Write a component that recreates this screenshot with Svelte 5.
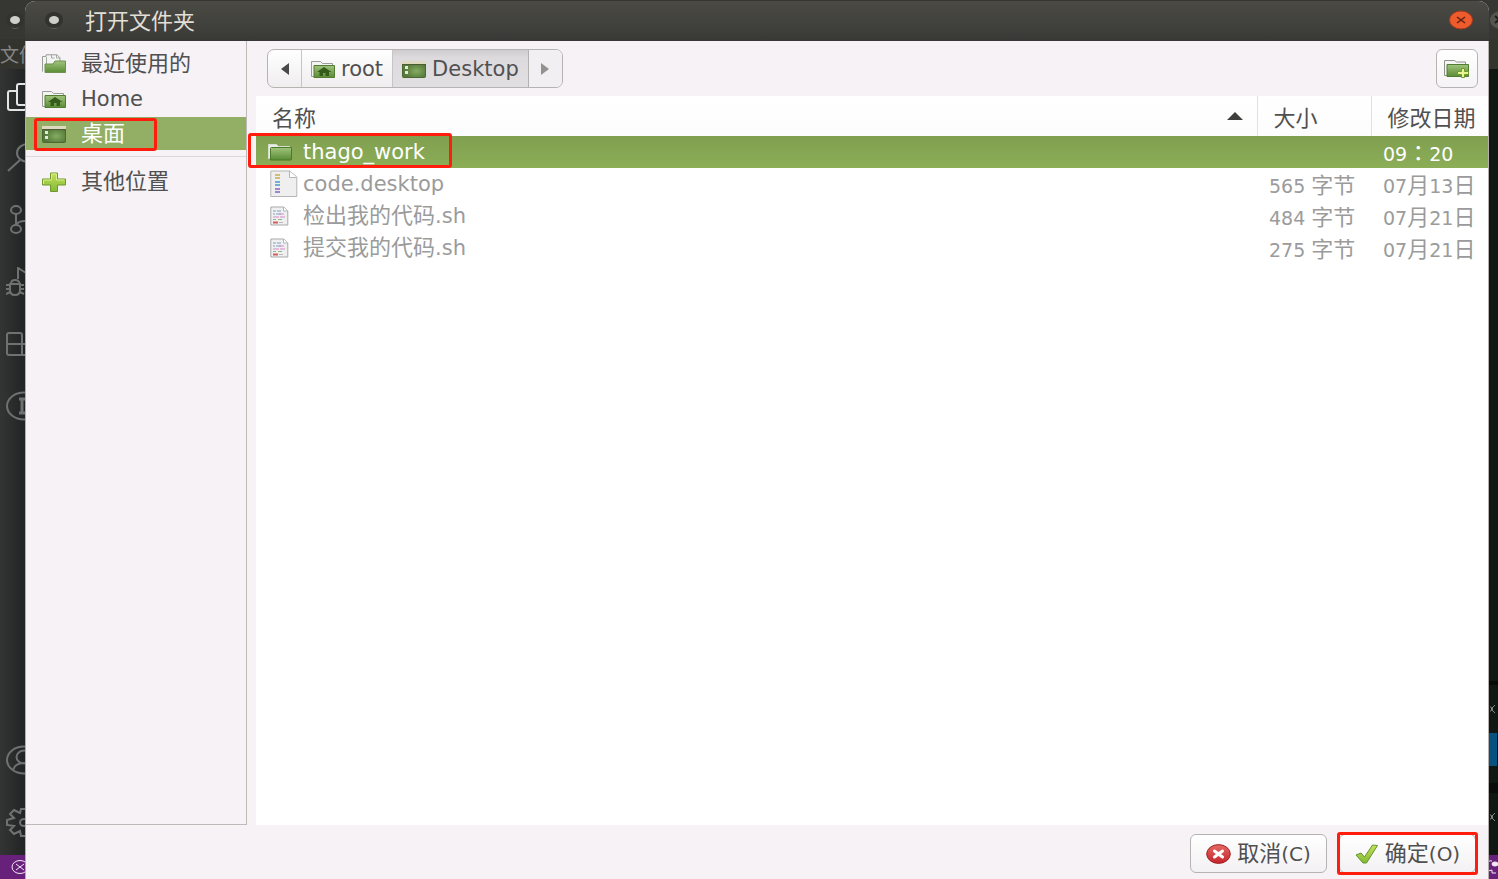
<script>
  const places = [
    { icon: 'recent', name: '最近使用的' },
    { icon: 'home', name: 'Home' },
    { icon: 'desktop', name: '桌面', selected: true },
    { icon: 'plus', name: '其他位置', separated: true }
  ];
  const files = [
    { icon: 'folder', name: 'thago_work', size: '', date: '09：20', selected: true },
    { icon: 'entry', name: 'code.desktop', size: '565 字节', date: '07月13日' },
    { icon: 'shell', name: '检出我的代码.sh', size: '484 字节', date: '07月21日' },
    { icon: 'shell', name: '提交我的代码.sh', size: '275 字节', date: '07月21日' }
  ];
  const tools = ['files', 'search', 'git', 'debug', 'blocks', 'info'];
  const accounts = ['account', 'gear'];

  // Splits a label into Latin, Han and full-width punctuation runs, which are set differently.
  const runs = (text) => text.match(/：|[\u3000-\uff00]+|[^\u3000-\uffef]+/g) ?? [];
</script>

{#snippet label(text)}{#each runs(text) as run}{#if /[\u3000-\uffef]/.test(run)}<span class="han" class:centred={run === '：'}>{run}</span>{:else}{run}{/if}{/each}{/snippet}

{#snippet icon(name)}
  {#if name === 'recent'}
    <svg width="24" height="20" viewBox="0 0 24 20" aria-hidden="true">
      <path d="M.5 17.500V2.500H4V.8h11l3 3V9" fill="#f4f4f2" stroke="#9b9d98" />
      <path d="M9.500 1v3h3M14.500 1v3H18M4.500 3v12" fill="none" stroke="#a8aaa5" />
      <path d="M3 18.500V10h8l2-3h10.500v11.500z" fill="url(#leaf)" stroke="#6c9150" />
    </svg>
  {:else if name === 'home'}
    <svg width="24" height="18" viewBox="0 0 24 18" aria-hidden="true">
      <path d="M.5 16.500V1.500h9l2 2h10V6M.5 16.500H3" fill="#f4f4f2" stroke="#9b9d98" />
      <path d="M3 17.500V5.500h20.500v12z" fill="url(#leaf)" stroke="#527c34" />
      <path d="M13 7 6 12h2.500v4H12v-3h2.500v3H18v-4h2.500z" fill="#365c1d" />
    </svg>
  {:else if name === 'desktop'}
    <svg width="24" height="18" viewBox="0 0 24 18" aria-hidden="true">
      <rect x=".5" y="1.500" width="23" height="16" rx="1" fill="url(#screen)" stroke="#4b6832" />
      <path d="M0 1h24v3H0z" fill="#ded8bf" /><path d="M0 4.500h24" stroke="#4c5c34" />
      <path d="M3 6h3v3H3zm0 5h3v3H3z" fill="#e2e9d9" />
    </svg>
  {:else if name === 'plus'}
    <svg width="24" height="20" viewBox="0 0 24 20" aria-hidden="true">
      <path d="M8.500 1h7v6h8v6h-8v6.500h-7V13h-8V7h8z" fill="url(#lime)" stroke="#6f982c" />
      <path d="M9.500 7.500V2h5v6h8M1.500 12V8h8" fill="none" stroke="#d9ee91" />
    </svg>
  {:else if name === 'folder'}
    <svg width="24" height="18" viewBox="0 0 24 18" aria-hidden="true">
      <path d="M.5 16V1.500h8l2 2h11V6" fill="#e9ece4" stroke="#d9ddd2" />
      <path d="M2.500 17V5.500q0-1 1-1h20V16q0 1-1 1z" fill="url(#leaf)" stroke="#4a7a2a" />
    </svg>
  {:else if name === 'new-folder'}
    <svg width="26" height="20" viewBox="0 0 26 20" aria-hidden="true">
      <path d="M.5 16.500V1.500h10l2 1.500h9V6M.5 16.500H3" fill="#f5f5f3" stroke="#8f928c" />
      <path d="M3 17.500v-12h21.500v12z" fill="url(#leaf)" stroke="#527c34" />
      <path d="M17.500 9.500h3v3h4v3h-4v3h-3v-3h-4v-3h4z" fill="#e6f58f" stroke="#6f982c" />
    </svg>
  {:else if name === 'entry'}
    <svg width="28" height="28" viewBox="0 0 28 28" aria-hidden="true">
      <path d="M.8 1h19l7 6v19.500H.8z" fill="#efefef" stroke="#b5b5b5" />
      <path d="M19.500 1v6.500h7" fill="#fff" stroke="#b5b5b5" />
      <path d="M5 5h5M5 8h5" stroke="#d0be77" stroke-width="2" />
      <path d="M5 12h5M5 15h5" stroke="#74add1" stroke-width="2" />
      <path d="M5 19h5M5 22h5" stroke="#9d86cc" stroke-width="2" />
    </svg>
  {:else if name === 'shell'}
    <svg width="19" height="20" viewBox="0 0 19 20" aria-hidden="true">
      <path d="M.8 1h13l4 4v14H.8z" fill="#f0f0f0" stroke="#a9a9a9" />
      <path d="M13.500 1v4h4" fill="#fff" stroke="#b5b5b5" />
      <path d="M3 5h3m1 0h4M3 8h2m1 0h5" stroke="#7f9fc9" />
      <path d="M3 11h6m1 0h5M9 8h5" stroke="#d38bc0" />
      <path d="M3 13.500h3m2 0h4" stroke="#8cb98c" /><path d="M3 16.500h5" stroke="#dc5b5b" stroke-width="2" /><path d="M9 16.500h4" stroke="#b9b9b9" />
    </svg>
  {:else if name === 'cancel'}
    <svg width="25" height="20" viewBox="0 0 25 20" aria-hidden="true">
      <ellipse cx="12.500" cy="10" rx="11.800" ry="9.400" fill="url(#ruby)" stroke="#a32024" />
      <path d="m8.500 7 8 6m0-6-8 6" stroke="#fff" stroke-width="3" stroke-linecap="round" />
    </svg>
  {:else if name === 'accept'}
    <svg width="24" height="20" viewBox="0 0 24 20" aria-hidden="true">
      <path d="m1 11 5-2 3.500 4L17.500 1l5 .5L11.500 19H8z" fill="url(#lime)" stroke="#64942f" stroke-linejoin="round" />
    </svg>
  {/if}
{/snippet}

{#snippet tool(name)}
  <svg class="tool" class:active={name === 'files'} width="36" height="30" viewBox="0 0 36 30" aria-hidden="true">
    {#if name === 'files'}
      <path d="M11 8H4q-2 0-2 2v15q0 2 2 2h14q2 0 2-2v-3M13 1h12l7 7v12q0 2-2 2H13q-2 0-2-2V3q0-2 2-2z" />
    {:else if name === 'search'}
      <ellipse cx="22" cy="10" rx="11" ry="9" /><path d="M14 17 2 28" />
    {:else if name === 'git'}
      <ellipse cx="10" cy="5" rx="5" ry="4" /><ellipse cx="10" cy="24" rx="5" ry="4" /><ellipse cx="26" cy="10" rx="5" ry="4" /><path d="M10 9v11q2-4 9-4 5 0 7-2" />
    {:else if name === 'debug'}
      <path d="M12 12V1l21 13-12 8M4 17h10v6q0 5-5 5t-5-5zM5 17q0-4 4-4t5 4M0 18h4m-4 4h4m-4 5 4-2m10-7h4m-4 4h4m-4 3 4 2" />
    {:else if name === 'blocks'}
      <path d="M3 4h11q2 0 2 2v20H3q-2 0-2-2V6q0-2 2-2zM1 15h28v9q0 2-2 2H16M20 1h12v10H20z" />
    {:else if name === 'info'}
      <ellipse cx="18" cy="15" rx="17" ry="13.500" /><path d="M13 8h6m-6 14h6M16 8v14" stroke-width="3" />
    {:else if name === 'account'}
      <ellipse cx="18" cy="15" rx="17" ry="13.500" /><ellipse cx="18" cy="12" rx="7.500" ry="6.500" /><path d="M7 25q2-7 11-7t11 7" />
    {:else}
      <path d="M15 2h6l1 4 6-3 4 4-4 4 7 2v5l-7 1 4 4-4 4-6-3-1 5h-6l-1-5-6 3-4-4 4-4-7-1v-5l7-2-4-4 4-4 6 3z" /><ellipse cx="18" cy="15.500" rx="4" ry="3.500" />
    {/if}
  </svg>
{/snippet}

{#snippet edgeMark()}
  <svg width="8" height="12" viewBox="0 0 8 12" aria-hidden="true"><path d="m-2 2 5 4-5 4M5 2 1 6l4 4" fill="none" stroke="#858b87" /></svg>
{/snippet}

<svg class="defs" aria-hidden="true">
  <defs>
    <linearGradient id="leaf" x1="0" y1="0" x2="0" y2="1"><stop offset="0" stop-color="#a0c47c" /><stop offset="1" stop-color="#5a8c35" /></linearGradient>
    <linearGradient id="lime" x1="0" y1="0" x2="0" y2="1"><stop offset="0" stop-color="#c4e05a" /><stop offset="1" stop-color="#83ba35" /></linearGradient>
    <linearGradient id="ruby" x1="0" y1="0" x2="0" y2="1"><stop offset="0" stop-color="#e56a63" /><stop offset="1" stop-color="#c4242b" /></linearGradient>
    <radialGradient id="screen" cx=".6" cy=".6"><stop offset="0" stop-color="#86ab62" /><stop offset="1" stop-color="#54793a" /></radialGradient>
  </defs>
</svg>

<div class="screen">
  <div class="editor">
    <div class="editor-title">
      <span class="dot"></span>
      <svg width="8" height="22" viewBox="0 0 8 22" aria-hidden="true"><ellipse cx="11" cy="11" rx="11" ry="9" fill="#55554f" /><path d="m5 7 8 7m0-7-8 7" stroke="#1d1d1b" stroke-width="2" /></svg>
    </div>
    <div class="editor-menu"><span class="han">文件</span></div>
    <div class="editor-body">
      <nav class="tools">
        {#each tools as name}<div class="slot">{@render tool(name)}</div>{/each}
        <div class="fill"></div>
        {#each accounts as name}<div class="slot">{@render tool(name)}</div>{/each}
      </nav>
      <div class="edge">
        <div class="edge-top"></div>
        <div class="edge-panel">{@render edgeMark()}</div>
        <div class="edge-blue"></div>
        <div class="edge-rule"></div>
        <div class="edge-panel low">{@render edgeMark()}</div>
      </div>
    </div>
    <div class="status">
      <svg width="20" height="16" viewBox="0 0 20 16" aria-hidden="true"><ellipse cx="9" cy="8" rx="8" ry="6.500" /><path d="m5 5 8 6m0-6-8 6" /></svg>
      <svg width="18" height="16" viewBox="0 0 18 16" aria-hidden="true"><ellipse class="solid" cx="15" cy="5" rx="3" ry="2" /><path d="M8 3q2-2 4-1M8 12l4-1v3h4" /></svg>
    </div>
  </div>

  <section class="dialog" aria-label="打开文件夹">
    <header class="titlebar">
      <span class="dot"></span>
      <h1 class="han">打开文件夹</h1>
      <button class="close" aria-label="关闭"><svg width="24" height="20" viewBox="0 0 24 20" aria-hidden="true"><ellipse cx="12" cy="10" rx="11.500" ry="9" fill="#ee5b2c" stroke="#a83a1b" /><path d="m8 7 8 6m0-6-8 6" stroke="#5c2415" stroke-width="1.500" /></svg></button>
    </header>

    <div class="content">
      <nav class="places">
        {#each places as place}
          {#if place.separated}<hr />{/if}
          <button class="place" class:selected={place.selected}>
            {@render icon(place.icon)}
            <span>{@render label(place.name)}</span>
            {#if place.selected}<span class="mark"></span>{/if}
          </button>
        {/each}
      </nav>

      <main>
        <div class="pathbar">
          <div class="crumbs">
            <button class="arrow" aria-label="后退"><svg width="8" height="12" viewBox="0 0 8 12" aria-hidden="true"><path d="M8 0v12L0 6z" fill="#4a4a48" /></svg></button>
            <button class="crumb">{@render icon('home')}root</button>
            <button class="crumb current">{@render icon('desktop')}Desktop</button>
            <button class="arrow dim" aria-label="前进"><svg width="8" height="12" viewBox="0 0 8 12" aria-hidden="true"><path d="M0 0v12l8-6z" fill="#92928f" /></svg></button>
          </div>
          <button class="create" aria-label="创建文件夹">{@render icon('new-folder')}</button>
        </div>

        <div class="list">
          <table>
            <thead>
              <tr>
                <th class="name"><div class="sort"><span class="han">名称</span><svg width="16" height="8" viewBox="0 0 16 8" aria-hidden="true"><path d="M0 8 8 0l8 8z" fill="#3f3f3d" /></svg></div></th>
                <th class="size"><div class="sort han">大小</div></th>
                <th class="date"><div class="sort han">修改日期</div></th>
              </tr>
            </thead>
            <tbody>
              {#each files as file}
                <tr class:selected={file.selected}>
                  <td><div class="file">
                    <span class="glyph">{@render icon(file.icon)}</span>
                    <span>{@render label(file.name)}</span>
                    {#if file.selected}<span class="mark"></span>{/if}
                  </div></td>
                  <td class="figure">{@render label(file.size)}</td>
                  <td class="figure">{@render label(file.date)}</td>
                </tr>
              {/each}
            </tbody>
          </table>
        </div>
      </main>
    </div>

    <footer>
      <button class="action">{@render icon('cancel')}<span>{@render label('取消(C)')}</span></button>
      <button class="action">{@render icon('accept')}<span>{@render label('确定(O)')}</span><span class="mark"></span></button>
    </footer>
  </section>
</div>

<style>
  :global(body) { margin: 0; background: #222524; }
  * { box-sizing: border-box; }
  svg { display: block; flex: none; }
  .defs { position: absolute; width: 0; height: 0; }
  button { position: relative; font: inherit; color: inherit; padding: 0; border: 0; background: none; }

  .screen { position: relative; min-height: 100vh; display: flex; overflow: hidden; font: 21px/30px "DejaVu Sans", "Noto Sans CJK SC", sans-serif; color: #505050; }
  .han { font-family: "Noto Sans CJK SC", sans-serif; font-size: 22px; font-weight: 400; line-height: 24px; }
  .centred { font-family: "Noto Sans CJK TC", sans-serif; }

  .editor { flex: 1; display: flex; flex-direction: column; background: #252828; color: #858585; }
  .editor-title { height: 39px; padding-left: 10px; display: flex; align-items: center; justify-content: space-between; background: #363632; }
  .editor-menu { height: 30px; display: flex; align-items: center; background: #34342f; }
  .editor-menu .han { font-size: 19px; }
  .editor-body { flex: 1; display: flex; justify-content: space-between; }
  .tools { width: 60px; padding: 0 0 2px 6px; display: flex; flex-direction: column; background: linear-gradient(90deg, #343434, #222525 24px); }
  .slot { height: 62px; display: flex; align-items: center; }
  .slot:first-child { height: 58px; }
  .fill { flex: 1; }
  .tool { fill: none; stroke: #6f7170; stroke-width: 2; }
  .tool.active { stroke: #e4e4e4; }
  .edge { width: 9px; display: flex; flex-direction: column; background: #101713; overflow: hidden; }
  .edge-top { flex: 1; border-bottom: 4px solid #060a08; }
  .edge-panel { height: 48px; padding-left: 1px; display: flex; align-items: center; }
  .edge-panel.low { height: 62px; padding-bottom: 14px; }
  .edge-blue { height: 33px; margin-right: 1px; background: #07517f; }
  .edge-rule { height: 10px; margin-top: 17px; background: #070b09; }
  .status { height: 24px; padding-left: 11px; display: flex; align-items: center; justify-content: space-between; background: #68217a; }
  .status svg { fill: none; stroke: #f2e8f5; stroke-width: 1; }
  .status .solid { fill: #f2e8f5; }

  .dot { width: 10px; height: 8px; border-radius: 50%; background: #cfcfc9; box-shadow: 0 0 0 4px #32322e, 0 5px 0 0 #5d5d57; }

  .dialog { position: absolute; inset: 1px 9px 0 25px; display: flex; flex-direction: column; border-radius: 10px 10px 0 0; background: #f6f2f6; overflow: hidden; }
  .titlebar { height: 40px; padding: 0 16px 2px 24px; display: flex; align-items: center; background: linear-gradient(#4b4a44, #3d3d3a 80%, #373735); color: #e2dfd6; }
  h1 { margin: 0 auto 0 26px; line-height: 30px; padding-bottom: 3px; }

  .content { flex: 1; display: flex; border: solid #b5b0ae; border-width: 0 1px; }
  .places { width: 221px; flex: none; padding-top: 6px; display: flex; flex-direction: column; gap: 2px; border: solid #bfb9b7; border-width: 0 1px 1px 0; }
  .place { height: 33px; padding-left: 16px; display: flex; align-items: center; gap: 15px; text-align: left; }
  .place.selected { background: #93af65; color: #fff; }
  hr { width: 100%; margin: 4px 0 6px; border: 0; border-top: 1px solid #dcd8da; }
  .mark { position: absolute; border: 3px solid #ff1d0d; border-radius: 3px; pointer-events: none; }
  .place .mark { inset: 1px 89px -1px 8px; }

  main { flex: 1; min-width: 0; padding-left: 9px; display: flex; flex-direction: column; }
  .pathbar { height: 55px; padding: 0 10px 0 11px; display: flex; align-items: center; justify-content: space-between; }
  .crumbs { height: 39px; display: flex; border: 1px solid #b7b3b3; border-radius: 7px; background: linear-gradient(#fff, #f0edef); overflow: hidden; }
  .arrow { width: 33px; display: grid; place-items: center; }
  .arrow.dim { background: #f1eff1; }
  .crumb { padding: 0 9px; display: flex; align-items: center; gap: 6px; border-left: 1px solid #c8c4c5; }
  .crumb.current { border-right: 1px solid #b5b1b3; background: linear-gradient(#cfcccf, #dddadd 20%, #e2dfe2); }
  .create { width: 42px; height: 39px; display: grid; place-items: center; border: 1px solid #b7b3b3; border-radius: 6px; background: linear-gradient(#fff, #f5f3f5); }

  .list { flex: 1; background: #fff; }
  table { width: 100%; border-collapse: collapse; table-layout: fixed; }
  th, td { padding: 0; text-align: left; font-weight: 400; white-space: nowrap; }
  th { height: 40px; padding-left: 16px; background: linear-gradient(#fff, #fdfcfd); }
  th.size, th.date { border-left: 1px solid #e2e0e2; }
  th.size { width: 114px; }
  th.date { width: 117px; }
  .sort { height: 32px; display: flex; align-items: center; justify-content: space-between; }
  .name .sort { padding-right: 14px; }
  td { height: 32px; color: #9b9b9b; }
  .file { position: relative; height: 32px; padding-left: 12px; display: flex; align-items: center; }
  .glyph { width: 35px; display: flex; padding-left: 2px; }
  tr.selected .glyph { padding-left: 0; }
  td.figure { padding-left: 12px; font-size: 19px; line-height: 24px; }
  tr.selected { background: linear-gradient(#809f50, #8bae56); }
  tr.selected td { color: #fff; }
  .file .mark { width: 204px; left: -8px; top: -3px; bottom: 0; }

  footer { height: 54px; padding: 9px 12px 6px; display: flex; justify-content: flex-end; gap: 12px; border: solid #b5b0ae; border-width: 0 1px; }
  .action { min-width: 137px; height: 39px; display: flex; align-items: center; justify-content: center; gap: 6px; border: 1px solid #b7b3b3; border-radius: 6px; background: linear-gradient(#fff, #f3f1f3); }
  .action > span { font-size: 20px; }
  .action .mark { inset: -3px; }
</style>
